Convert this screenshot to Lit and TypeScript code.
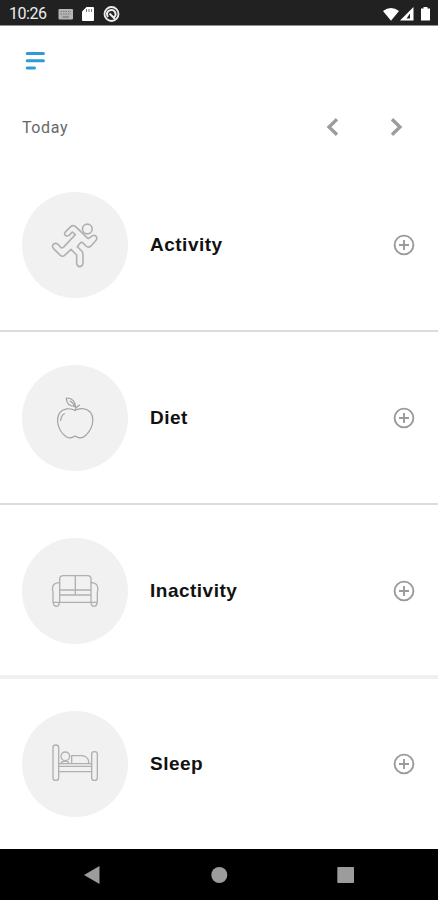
import { LitElement, html, css, svg } from "lit";
import { customElement } from "lit/decorators.js";

const runner = svg`
  <circle cx="217" cy="132" r="14.5"/>
  <path d="M150 142 L167 125 Q173 119 181 124 L216 158 Q220 162 224 158 L233 152 Q239 149 243 154 Q248 160 243 166 L229 182 Q221 190 213 183 L203 173 Q199 170 195 175 L187 185 L200 198 Q204 202 204 209 L204 235 Q202 245 194 245 Q186 244 185 235 L185 210 L168 193 L148 212 Q142 216 136 211 L115 190 Q110 184 115 178 Q121 172 129 178 L137 187 Q141 190 145 187 L181 149 L172 141 L162 151 Q156 155 151 151 Q147 147 150 142 Z"/>`;

const apple = svg`
  <path d="M180 157 C165 149 145 151 135 163 C120 184 130 221 155 237 C165 243 173 239 180 234 C187 239 197 243 207 236 C233 217 240 183 227 164 C216 150 196 149 180 157 Z"/>
  <path d="M180 158 C182 151 185 145 194 141 M182 148 C181 132 174 120 154 120 C154 137 165 147 182 144 M165 129 Q175 134 181 148"/>
  <path d="M148 167 Q139 171 137 187"/>`;

const sofa = svg`
  <path d="M134 217 V147 Q134 137 145 137 H218 Q228 137 228 147 V217 M181 137 V195 M134 180 H228 M134 195 H228"/>
  <path d="M134 158 Q118 158 114 168 Q110 179 114 187 V217 H247 V187 Q251 179 247 168 Q243 158 228 158"/>
  <path d="M115 217 Q115 229 124 229 Q132 229 133 217 M228 217 Q228 229 237 229 Q245 229 246 217"/>`;

const bed = svg`
  <rect x="114" y="122" width="17" height="106" rx="8"/>
  <rect x="230" y="142" width="17" height="86" rx="8"/>
  <path d="M131 178 H230 M131 186 H230 M131 202 H230"/>
  <circle cx="151" cy="156" r="13"/>
  <path d="M138 177 Q141 170 151 170 Q159 170 162 177 M170 176 V154 H200 Q217 155 221 170 V176"/>`;

const entries = [
  { label: "Activity", icon: runner, box: "21 21 318 318", kind: "bold" },
  { label: "Diet", icon: apple, box: "21 21 318 318", kind: "fine" },
  { label: "Inactivity", icon: sofa, box: "21 24 318 318", kind: "" },
  { label: "Sleep", icon: bed, box: "21 20 318 318", kind: "" },
];

@customElement("app-root")
export class AppRoot extends LitElement {
  static styles = css`
    :host {
      display: flex;
      flex-direction: column;
      height: 900px;
      overflow: hidden;
      background: #fff;
      font-family: Roboto, sans-serif;
    }
    svg { display: block; flex: none; }
    .status {
      box-sizing: border-box;
      height: 26px;
      flex: none;
      display: flex;
      align-items: center;
      background: #212121;
      border-bottom: 1px solid #909090;
      padding: 2px 5px 0 9px;
      color: #eee;
      font-size: 16px;
    }
    .time { width: 49px; letter-spacing: -0.45px; }
    .grow { flex: 1; }
    .menu { box-sizing: border-box; padding: 25px 0 0 25px; height: 68px; flex: none; }
    .day {
      box-sizing: border-box;
      display: flex;
      align-items: center;
      height: 65px;
      flex: none;
      padding: 1px 35px 0 22px;
      color: #686868;
      font-size: 16px;
      letter-spacing: 0.6px;
    }
    .arrows { display: flex; gap: 51px; margin-left: auto; }
    .arrows path { fill: none; stroke: #9c9c9c; stroke-width: 3.3; }
    .list { flex: 1; overflow: hidden; }
    .row {
      box-sizing: border-box;
      height: 173px;
      display: flex;
      align-items: center;
      padding: 1px 23px 0 22px;
      border-bottom: 2px solid #dcdcdc;
    }
    .row:nth-child(3) { border-bottom: 4px solid #f0f0f0; height: 174px; padding-top: 2px; }
    .row:nth-child(4) { border-bottom-color: transparent; padding-top: 0; padding-bottom: 2px; }
    .disc {
      width: 106px;
      height: 106px;
      border-radius: 50%;
      background: #f1f1f1;
    }
    .disc svg { fill: none; stroke: #b0b0b0; stroke-width: 4; stroke-linejoin: round; stroke-linecap: round; }
    .disc .fine { stroke: #a0a0a0; stroke-width: 3.4; }
    .disc .bold { stroke-width: 4.8; }
    .label {
      flex: 1;
      margin-left: 22px;
      font: bold 19px "Liberation Sans", sans-serif;
      letter-spacing: 0.5px;
      color: #111;
    }
    .plus { fill: none; stroke: #9a9a9a; stroke-width: 1.9; }
    .nav { height: 51px; flex: none; background: #000; display: flex; align-items: center; }
  `;

  render() {
    return html`
      <div class="status">
        <span class="time">10:26</span>
        <svg width="62" height="18" viewBox="0 0 62 18">
          <rect x="0.5" y="4" width="14.5" height="10.5" rx="1" fill="#b5b5b5"/>
          <path d="M2.5 6.5h10.5M2.5 9h10.5" stroke="#777" stroke-dasharray="1.5 1"/>
          <path d="M4.5 12h6.5" stroke="#666"/>
          <path d="M28.5 2H35q1 0 1 1v12q0 1-1 1H25q-1 0-1-1V6.5Z" fill="#fff"/>
          <path d="M28.5 4v3M31 4v3M33.5 4v3" stroke="#777"/>
          <circle cx="53.5" cy="9" r="7" fill="none" stroke="#eee" stroke-width="1.8"/>
          <path d="M50 12q-2.5-4 1-6.3q4-1.7 6 1.3q1.500 3-.7 5M51.500 8.500l5.500 5.500" fill="none" stroke="#eee" stroke-width="2"/>
        </svg>
        <span class="grow"></span>
        <svg width="50" height="18" viewBox="0 0 50 18">
          <path d="M0 6Q8 0 16 6L8 15.800Z" fill="#fff"/>
          <path d="M17 15.500L30.500 2V15.500Z" fill="#fff"/>
          <path d="M23.500 13.500L27 8.500V13.500Z" fill="#212121"/>
          <path d="M38 3.500h2.500V2h4v1.500H47V15.500H38Z" fill="#fff"/>
        </svg>
      </div>
      <div class="menu">
        <svg width="22" height="20" viewBox="0 0 22 20">
          <path d="M2.200 2.500H18.400M2.200 9.700H18.400M2.200 17H9.500" stroke="#2f9bd2" stroke-width="3" stroke-linecap="round"/>
        </svg>
      </div>
      <div class="day">
        <span>Today</span>
        <div class="arrows">
          <svg width="13" height="18" viewBox="0 0 13 18"><path d="M11 1.200L3 9L11 16.800"/></svg>
          <svg width="13" height="18" viewBox="0 0 13 18"><path d="M2 1.200L10 9L2 16.800"/></svg>
        </div>
      </div>
      <div class="list">
        ${entries.map(
          (e) => html`
            <div class="row">
              <div class="disc">
                <svg class=${e.kind} width="106" height="106" viewBox=${e.box}>${e.icon}</svg>
              </div>
              <span class="label">${e.label}</span>
              <svg class="plus" width="22" height="22" viewBox="0 0 22 22">
                <circle cx="11" cy="11" r="9.400"/>
                <path d="M11 6v10M6 11h10"/>
              </svg>
            </div>
          `
        )}
      </div>
      <div class="nav">
        <svg width="438" height="51" viewBox="0 0 438 51">
          <path d="M84 26L99.500 17V35Z" fill="#9c9c9c"/>
          <circle cx="219.300" cy="26" r="8" fill="#9c9c9c"/>
          <rect x="337.300" y="18" width="16.700" height="16" rx="0.800" fill="#9c9c9c"/>
        </svg>
      </div>
    `;
  }
}
